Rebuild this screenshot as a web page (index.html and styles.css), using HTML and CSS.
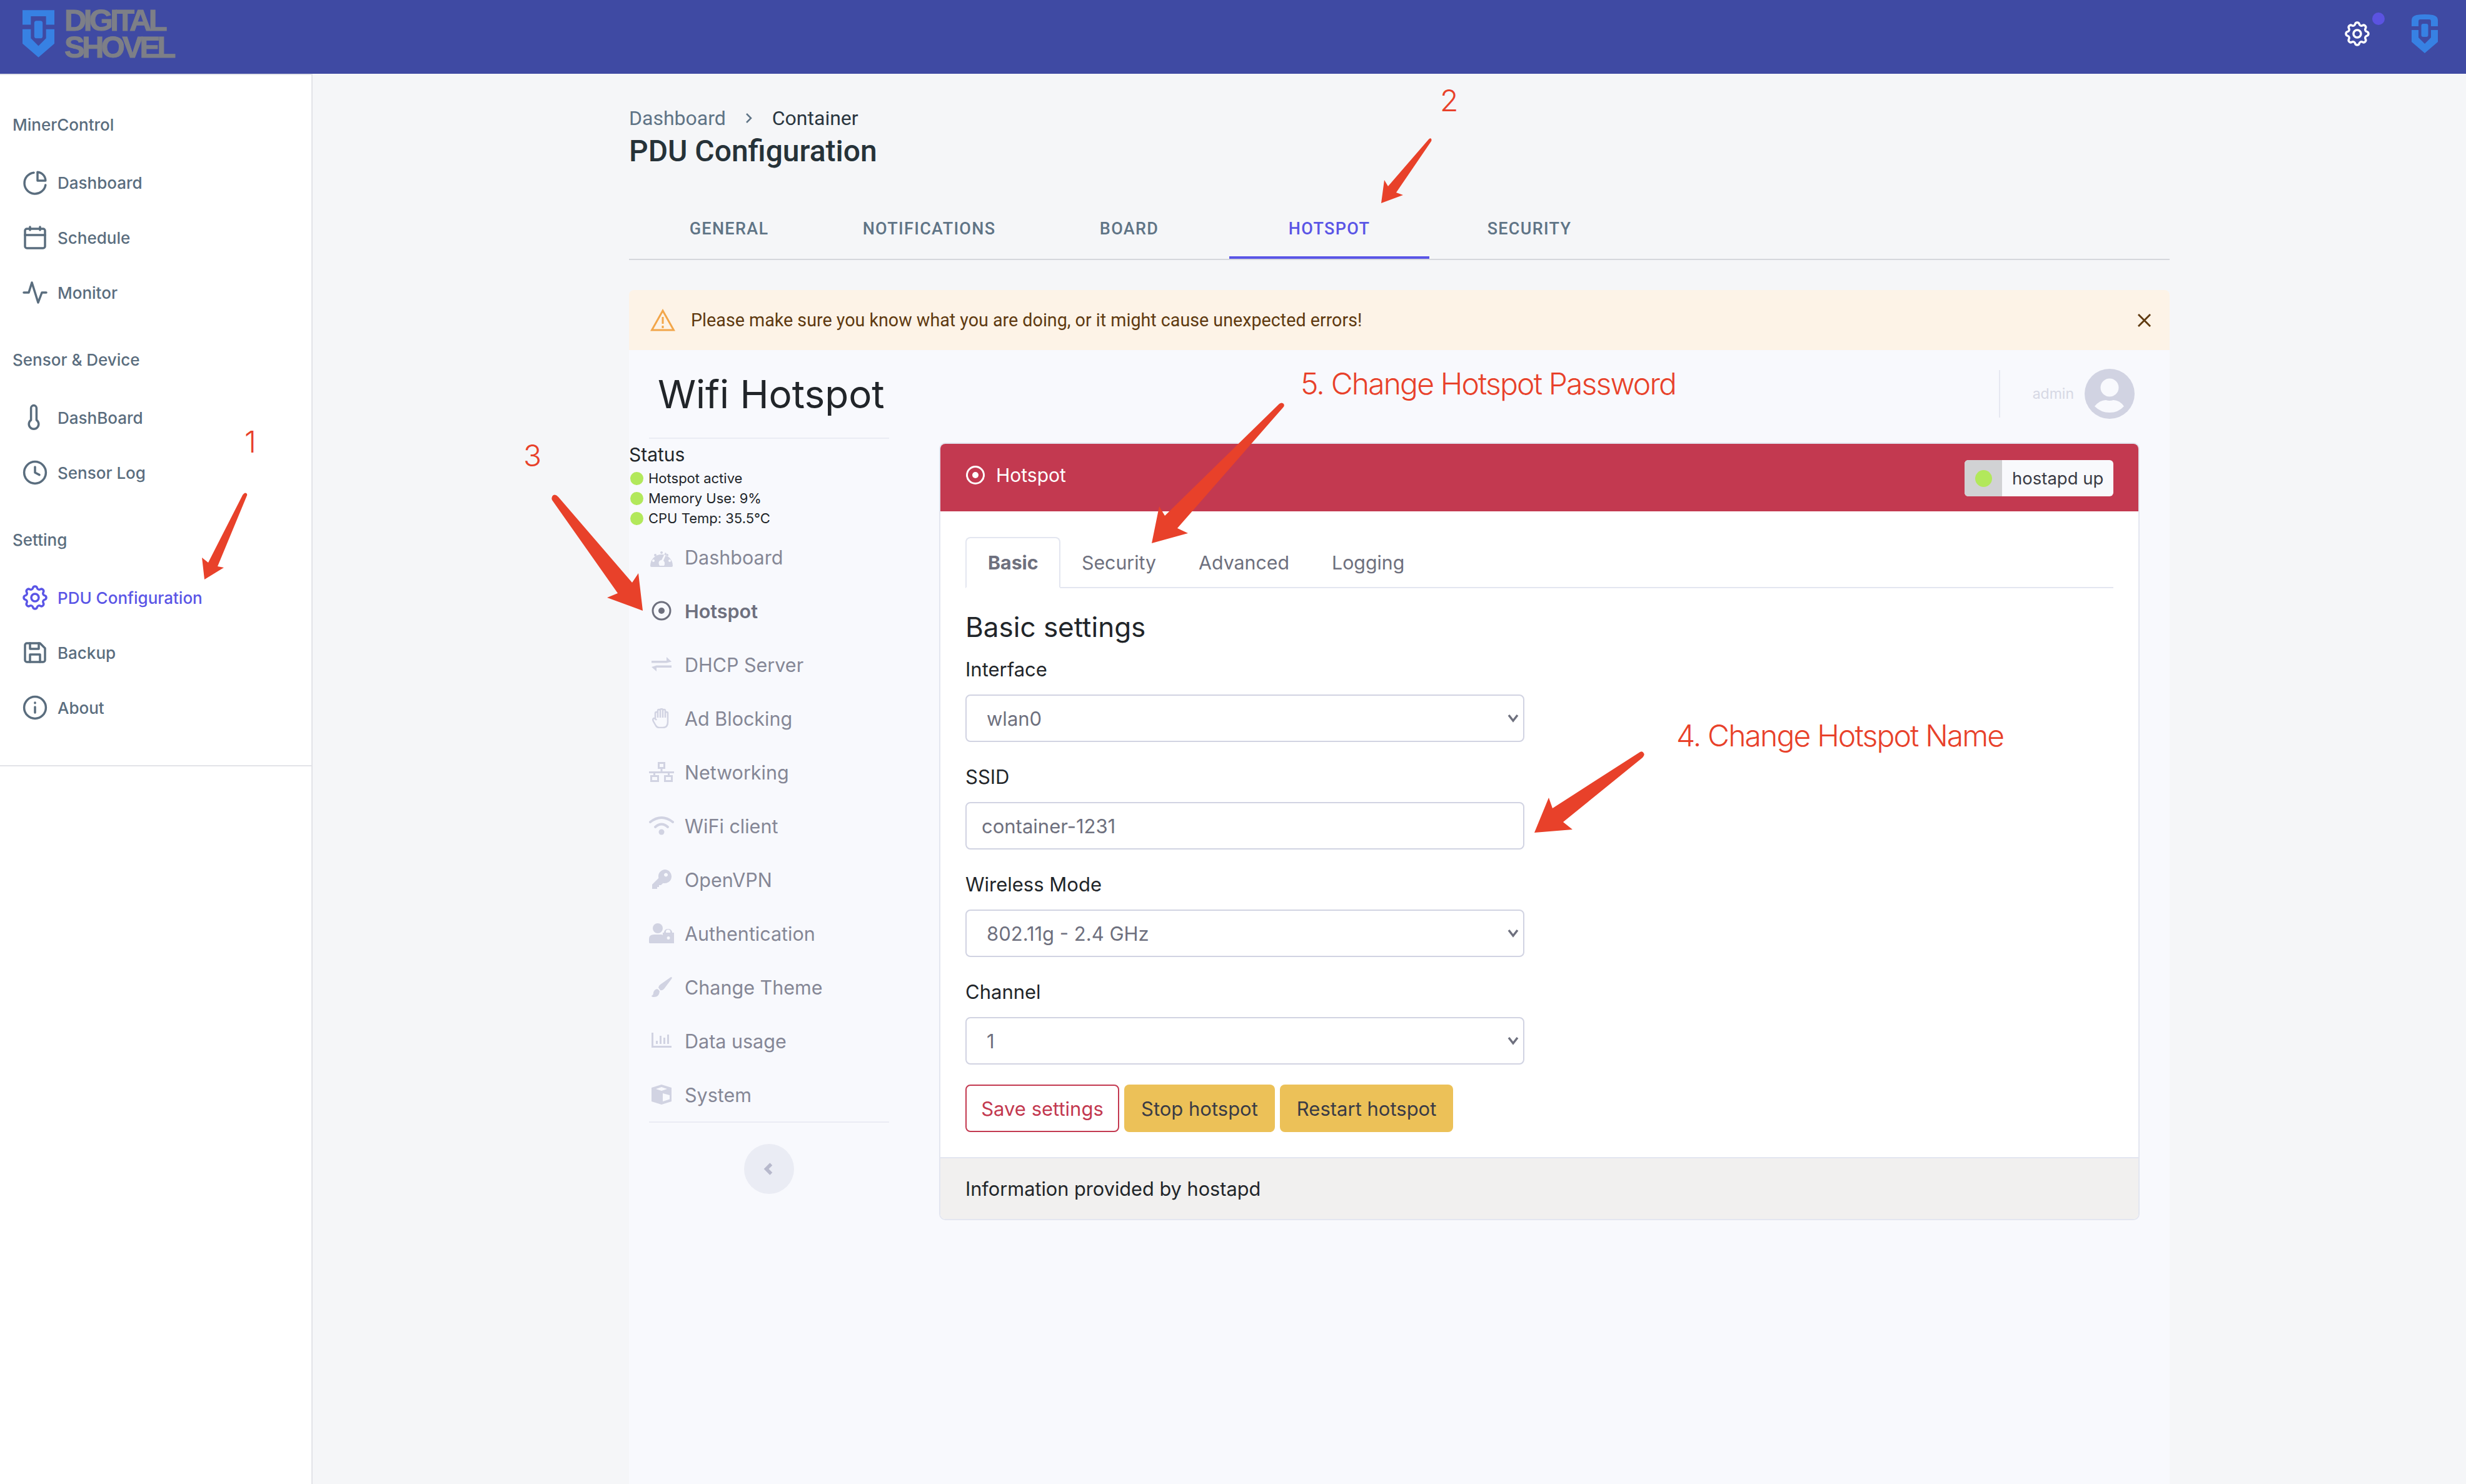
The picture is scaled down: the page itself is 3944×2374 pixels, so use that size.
FILE: index.html
```html
<!DOCTYPE html>
<html lang="en">
<head>
    <meta charset="UTF-8">
    <title>PDU Configuration</title>
    <link rel="stylesheet" href="styles.css">
</head>
<body>

<header class="topbar">
    <div class="brand">
        <svg class="brand-mark" viewBox="0 0 42 62">
            <path d="M0 19V0H42V19H31V8H11V19Z"/>
            <path d="M0 25H11V37L21 47L31 37V25H42V44L21 62L0 44Z"/>
            <rect x="15.5" y="14" width="11" height="23" rx="3"/>
        </svg>
        <div class="brand-name">DIGITAL<br>SHOVEL</div>
    </div>
    <div class="topbar-right">
        <div class="gear-wrap">
            <svg class="icon-line" viewBox="0 0 24 24"><path d="M10.325 4.317c.426-1.756 2.924-1.756 3.35 0a1.724 1.724 0 002.573 1.066c1.543-.94 3.31.826 2.37 2.37a1.724 1.724 0 001.065 2.572c1.756.426 1.756 2.924 0 3.35a1.724 1.724 0 00-1.066 2.573c.94 1.543-.826 3.31-2.37 2.37a1.724 1.724 0 00-2.572 1.065c-.426 1.756-2.924 1.756-3.35 0a1.724 1.724 0 00-2.573-1.066c-1.543.94-3.31-.826-2.37-2.37a1.724 1.724 0 00-1.065-2.572c-1.756-.426-1.756-2.924 0-3.35a1.724 1.724 0 001.066-2.573c-.94-1.543.826-3.31 2.37-2.37.996.608 2.296.07 2.572-1.065z"/><path d="M15 12a3 3 0 11-6 0 3 3 0 016 0z"/></svg>
            <span class="gear-dot"></span>
        </div>
        <svg class="small-mark" viewBox="0 0 42 62">
            <path d="M0 19V9Q0 3 8 1Q14 0 21 0Q28 0 34 1Q42 3 42 9V19H31V11Q31 8 28 8H14Q11 8 11 11V19Z"/>
            <path d="M0 25H11V37L21 47L31 37V25H42V44L21 62L0 44Z"/>
            <rect x="15.5" y="15" width="11" height="21" rx="3"/>
        </svg>
    </div>
</header>

<div class="layout">
    <aside class="sidebar">
        <nav class="sidebar-nav">
            <div class="side-title">MinerControl</div>
            <a class="side-link">
                <svg class="icon-line" viewBox="0 0 24 24"><path d="M11 4.1A8.5 8.5 0 1 0 20.4 14"/><path d="M14 3.6A7 7 0 0 1 20.4 10.5H14Z"/></svg>
                Dashboard
            </a>
            <a class="side-link">
                <svg class="icon-line" viewBox="0 0 24 24"><rect x="4" y="5" width="16" height="15.5" rx="1.5"/><path d="M4 10h16M8 3.5V6M16 3.5V6"/></svg>
                Schedule
            </a>
            <a class="side-link">
                <svg class="icon-line" viewBox="0 0 24 24"><path d="M3 12H7L9.5 4L14.5 20L17.5 12H21"/></svg>
                Monitor
            </a>

            <div class="side-title side-title-gap">Sensor &amp; Device</div>
            <a class="side-link">
                <svg class="icon-line" viewBox="0 0 24 24"><path d="M8.800 14V4.500a2.200 2.200 0 0 1 4.400 0V14a3.900 3.900 0 1 1-4.400 0Z"/></svg>
                DashBoard
            </a>
            <a class="side-link">
                <svg class="icon-line" viewBox="0 0 24 24"><circle cx="12" cy="12" r="8.7"/><path d="M12 7.5V12L15.5 13.8"/></svg>
                Sensor Log
            </a>

            <div class="side-title side-title-gap">Setting</div>
            <a class="side-link side-link-active">
                <svg class="icon-line" viewBox="0 0 24 24"><path d="M10.325 4.317c.426-1.756 2.924-1.756 3.35 0a1.724 1.724 0 002.573 1.066c1.543-.94 3.31.826 2.37 2.37a1.724 1.724 0 001.065 2.572c1.756.426 1.756 2.924 0 3.35a1.724 1.724 0 00-1.066 2.573c.94 1.543-.826 3.31-2.37 2.37a1.724 1.724 0 00-2.572 1.065c-.426 1.756-2.924 1.756-3.35 0a1.724 1.724 0 00-2.573-1.066c-1.543.94-3.31-.826-2.37-2.37a1.724 1.724 0 00-1.065-2.572c-1.756-.426-1.756-2.924 0-3.35a1.724 1.724 0 001.066-2.573c-.94-1.543.826-3.31 2.37-2.37.996.608 2.296.07 2.572-1.065z"/><path d="M15 12a3 3 0 11-6 0 3 3 0 016 0z"/></svg>
                PDU Configuration
            </a>
            <a class="side-link">
                <svg class="icon-line" viewBox="0 0 24 24"><path d="M4 6a1.500 1.500 0 0 1 1.500-1.500H16L20 8.500V18a1.500 1.500 0 0 1-1.500 1.500H5.500A1.500 1.500 0 0 1 4 18Z"/><path d="M8 4.500V9H15V4.500M8 19.500V13.500H16V19.500"/></svg>
                Backup
            </a>
            <a class="side-link">
                <svg class="icon-line" viewBox="0 0 24 24"><circle cx="12" cy="12" r="8.7"/><path d="M12 11.500V16M12 8V8.400"/></svg>
                About
            </a>
        </nav>
    </aside>

    <main class="main">
        <div class="crumbs">
            <span class="crumb-link">Dashboard</span>
            <svg class="crumb-sep" viewBox="0 0 14 18"><path d="M3 2L10 9L3 16"/></svg>
            <span class="crumb-here">Container</span>
        </div>
        <h1 class="page-title">PDU Configuration</h1>

        <div class="page-tabs">
            <a class="page-tab">GENERAL</a>
            <a class="page-tab">NOTIFICATIONS</a>
            <a class="page-tab">BOARD</a>
            <a class="page-tab page-tab-active">HOTSPOT</a>
            <a class="page-tab">SECURITY</a>
        </div>

        <div class="alert">
            <svg class="alert-icon" viewBox="0 0 40 36"><path d="M20 3L37.500 34H2.500Z"/><path d="M20 13V24M20 27V31"/></svg>
            <span class="alert-text">Please make sure you know what you are doing, or it might cause unexpected errors!</span>
            <svg class="alert-close" viewBox="0 0 22 22"><path d="M1 1L21 21M21 1L1 21"/></svg>
        </div>

        <div class="panel">
            <div class="panel-side">
                <div class="panel-brand">Wifi Hotspot</div>
                <div class="status">
                    <div class="status-title">Status</div>
                    <div class="status-row"><span class="dot"></span>Hotspot active</div>
                    <div class="status-row"><span class="dot"></span>Memory Use: 9%</div>
                    <div class="status-row"><span class="dot"></span>CPU Temp: 35.5°C</div>
                </div>
                <ul class="panel-nav">
                    <li class="panel-link">
                        <svg class="nav-icon" viewBox="0 0 40 32"><path fill-rule="evenodd" d="M2 30A18 18 0 1 1 38 30Q38 32 36 32H4Q2 32 2 30ZM20 7a2 2 0 1 0 .1 0ZM10 11a2 2 0 1 0 .1 0ZM29 11a2 2 0 1 0 .1 0ZM7 20a2 2 0 1 0 .1 0ZM33 20a2 2 0 1 0 .1 0ZM26 9L20 21a4.500 4.500 0 0 0-4.500 4.500Q15.500 28 17 30H24Q25.500 28 25 25Q24.500 23 23 22L28 10Z"/></svg>
                        Dashboard
                    </li>
                    <li class="panel-link panel-link-active">
                        <svg class="nav-icon" viewBox="0 0 40 32"><circle class="ring" cx="20" cy="16" r="14"/><circle cx="20" cy="16" r="5"/></svg>
                        Hotspot
                    </li>
                    <li class="panel-link">
                        <svg class="nav-icon" viewBox="0 0 40 32"><path d="M4 10H28V4L36 11.500L28 13.500H4ZM36 21H12V27L4 20L12 17.500H36Z"/></svg>
                        DHCP Server
                    </li>
                    <li class="panel-link">
                        <svg class="nav-icon nav-icon-line" viewBox="0 0 40 32"><path d="M10 18V8a2 2 0 0 1 4 0V4a2 2 0 0 1 4 0V3a2 2 0 0 1 4 0V4a2 2 0 0 1 4 0V8a2 2 0 0 1 4 0V22Q30 31 22 31H16Q13 31 11 28L7 21Q5 17 8 16Q10 16 12 19M14 7V15M18 4V15M22 4V15M26 7V15"/></svg>
                        Ad Blocking
                    </li>
                    <li class="panel-link">
                        <svg class="nav-icon" viewBox="0 0 40 32"><path fill-rule="evenodd" d="M14 0H26V11H21.500V15H40V18H33V21H38V32H24V21H30V18H10V21H16V32H2V21H7V18H0V15H18.500V11H14ZM17 3V8H23V3ZM5 24V29H13V24ZM27 24V29H35V24Z"/></svg>
                        Networking
                    </li>
                    <li class="panel-link">
                        <svg class="nav-icon nav-icon-arc" viewBox="0 0 40 32"><path d="M2 10Q20 -4 38 10"/><path d="M10 18Q20 9 30 18"/><circle class="arc-dot" cx="20" cy="26" r="4.500"/></svg>
                        WiFi client
                    </li>
                    <li class="panel-link">
                        <svg class="nav-icon" viewBox="0 0 40 32"><path fill-rule="evenodd" d="M25 0A11 11 0 1 1 22.500 21.700L19 25H16V28H13V31L5 31V24L15.300 13.700A11 11 0 0 1 25 0ZM27 5.500a3 3 0 1 0 .1 0Z"/></svg>
                        OpenVPN
                    </li>
                    <li class="panel-link">
                        <svg class="nav-icon" viewBox="0 0 40 32"><circle cx="14" cy="8" r="8"/><path d="M0 31V25Q0 18 8 18H20Q21 18 22 19V32H1Z"/><path fill-rule="evenodd" d="M24 15V13.500a7 7 0 0 1 13 0V15H40V32H22V15ZM27 15H34V13.500a3.500 3.500 0 0 0-7 0ZM31 21a2.500 2.500 0 1 0 .1 0Z"/></svg>
                        Authentication
                    </li>
                    <li class="panel-link">
                        <svg class="nav-icon" viewBox="0 0 40 32"><path d="M35 0Q38 0 36 3L24 19Q21 22 18 21L15 17Q15 14 18 12ZM13 19Q16 20 17 23Q16 32 8 32Q4 32 4 30Q7 29 7 25Q8 20 13 19Z"/></svg>
                        Change Theme
                    </li>
                    <li class="panel-link">
                        <svg class="nav-icon" viewBox="0 0 40 32"><path d="M4 3H7V24H36V27H4ZM11 16H14V21H11ZM17 8H20V21H17ZM23 11H26V21H23ZM29 6H32V21H29Z"/></svg>
                        Data usage
                    </li>
                    <li class="panel-link">
                        <svg class="nav-icon" viewBox="0 0 40 32"><path fill-rule="evenodd" d="M20 0L36 5V27L20 32L4 27V5ZM20 4L11 7L20 10L29 7ZM22 14V27L33 23.500V17Z"/></svg>
                        System
                    </li>
                </ul>
                <button class="collapse-btn" type="button">
                    <svg viewBox="0 0 20 20"><path d="M13 3L6 10L13 17"/></svg>
                </button>
            </div>

            <div class="panel-main">
                <div class="user-bar">
                    <span class="user-sep"></span>
                    <span class="user-name">admin</span>
                    <svg class="avatar" viewBox="0 0 80 80">
                        <circle class="avatar-bg" cx="40" cy="40" r="40"/>
                        <circle class="avatar-fg" cx="40" cy="30" r="14.500"/>
                        <path class="avatar-fg" d="M16 60Q24 50 34 50Q40 52 46 50Q56 50 63 60Q54 70 40 70Q26 70 16 60Z"/>
                    </svg>
                </div>

                <section class="card">
                    <div class="card-header">
                        <div class="card-title">
                            <svg class="card-icon" viewBox="0 0 32 32"><circle class="ring" cx="16" cy="16" r="13.500"/><circle cx="16" cy="16" r="5"/></svg>
                            Hotspot
                        </div>
                        <div class="state-badge">
                            <span class="state-light"><span class="dot dot-big"></span></span>
                            <span class="state-text">hostapd up</span>
                        </div>
                    </div>

                    <div class="card-body">
                        <div class="form-tabs">
                            <a class="form-tab form-tab-active">Basic</a>
                            <a class="form-tab">Security</a>
                            <a class="form-tab">Advanced</a>
                            <a class="form-tab">Logging</a>
                        </div>

                        <h4 class="form-heading">Basic settings</h4>

                        <div class="field">
                            <label>Interface</label>
                            <div class="select-wrap">
                                <select class="control"><option>wlan0</option></select>
                                <svg class="select-arrow" viewBox="0 0 18 14"><path d="M2 2L9 11L16 2"/></svg>
                            </div>
                        </div>
                        <div class="field">
                            <label>SSID</label>
                            <input class="control control-text" type="text" value="container-1231">
                        </div>
                        <div class="field">
                            <label>Wireless Mode</label>
                            <div class="select-wrap">
                                <select class="control"><option>802.11g - 2.4 GHz</option></select>
                                <svg class="select-arrow" viewBox="0 0 18 14"><path d="M2 2L9 11L16 2"/></svg>
                            </div>
                        </div>
                        <div class="field">
                            <label>Channel</label>
                            <div class="select-wrap">
                                <select class="control"><option>1</option></select>
                                <svg class="select-arrow" viewBox="0 0 18 14"><path d="M2 2L9 11L16 2"/></svg>
                            </div>
                        </div>

                        <div class="actions">
                            <button class="btn btn-save" type="button">Save settings</button>
                            <button class="btn btn-warn" type="button">Stop hotspot</button>
                            <button class="btn btn-warn" type="button">Restart hotspot</button>
                        </div>
                    </div>

                    <div class="card-footer">Information provided by hostapd</div>
                </section>
            </div>
        </div>
    </main>
</div>

<!-- red notes drawn on top of the screenshot -->
<svg class="arrows" viewBox="0 0 3944 2374">
    <path d="M388 792Q392 786 395 790Q396 792 394 795L348 906L358 908L327 927L323 892L333 900Z"/>
    <path d="M2284 224Q2287 220 2289 222Q2290 224 2289 226L2233 308L2244 312L2209 325L2214 288L2220 298Z"/>
    <path d="M883 800Q881 795 885 792Q889 790 893 795L1011 932L1021 917L1028 977L971 956L988 949Z"/>
    <path d="M2623 1203Q2627 1201 2629 1205Q2631 1208 2627 1212L2500 1315L2515 1327L2454 1332L2477 1276L2483 1293Z"/>
    <path d="M2046 646Q2050 643 2053 646Q2055 649 2052 652L1883 845L1900 853L1842 869L1854 810L1863 825Z"/>
</svg>
<span class="note note-1">1</span>
<span class="note note-2">2</span>
<span class="note note-3">3</span>
<span class="note note-4">4. Change Hotspot Name</span>
<span class="note note-5">5. Change Hotspot Password</span>

</body>
</html>
```

FILE: styles.css
```css
* {
    box-sizing: border-box;
}

html, body {
    height: 100%;
}

body {
    margin: 0;
    position: relative;
    display: flex;
    flex-direction: column;
    overflow: hidden;
    font-family: Inter, "Noto Sans", sans-serif;
    font-size: 31px;
    color: #212529;
    background-color: #f5f6f8;
}

svg {
    display: block;
    flex: none;
}

.icon-line {
    width: 48px;
    height: 48px;
    fill: none;
    stroke: currentColor;
    stroke-width: 1.75;
    stroke-linecap: round;
    stroke-linejoin: round;
}

/* top bar */
.topbar {
    height: 118px;
    flex: none;
    display: flex;
    align-items: center;
    justify-content: space-between;
    padding: 0 45px 10px 36px;
    background-color: #3f4aa3;
    color: #fff;
}

.brand {
    display: flex;
    align-items: center;
    gap: 16px;
}

.brand-mark {
    width: 51px;
    height: 76px;
    fill: #3781e3;
}

.brand-name {
    font-family: "Liberation Sans", Arial, sans-serif;
    font-weight: 700;
    font-size: 49px;
    line-height: 43px;
    letter-spacing: -4.6px;
    color: #7d7f87;
    -webkit-text-stroke: 1px #7d7f87;
}

.topbar-right {
    display: flex;
    align-items: center;
    gap: 63px;
}

.gear-wrap {
    position: relative;
}

.gear-dot {
    position: absolute;
    top: -10px;
    right: -20px;
    width: 20px;
    height: 20px;
    border-radius: 50%;
    background-color: #5b53e0;
}

.small-mark {
    width: 42px;
    height: 62px;
    fill: #3781e3;
}

/* layout */
.layout {
    flex: 1;
    display: flex;
    min-height: 0;
}

.sidebar {
    width: 500px;
    flex: none;
    background-color: #fff;
    border-top: 2px solid #e2e3e8;
    border-right: 2px solid #e2e3e8;
}

.sidebar-nav {
    padding: 60px 0 48px;
    border-bottom: 2px solid #e2e3e8;
}

.side-title {
    height: 40px;
    line-height: 40px;
    padding-left: 20px;
    margin-bottom: 28px;
    font-size: 26px;
    font-weight: 500;
    color: #5a6d7e;
}

.side-title-gap {
    margin-top: 44px;
}

.side-link {
    height: 88px;
    display: flex;
    align-items: center;
    gap: 12px;
    padding-left: 32px;
    font-size: 26px;
    font-weight: 500;
    color: #5a6d7e;
}

.side-link-active {
    color: #5a55e6;
}

/* main column */
.main {
    flex: 1;
    display: flex;
    flex-direction: column;
    min-width: 0;
    padding: 49px 474px 0 506px;
}

.crumbs {
    height: 44px;
    display: flex;
    align-items: center;
    font-family: Roboto, sans-serif;
    font-size: 32px;
}

.crumb-link {
    color: #5f7486;
}

.crumb-sep {
    width: 14px;
    height: 18px;
    margin: 0 30px;
    fill: none;
    stroke: #5f7486;
    stroke-width: 2.5;
}

.crumb-here {
    color: #2a3640;
}

.page-title {
    margin: 0;
    height: 62px;
    line-height: 62px;
    font-family: Roboto, sans-serif;
    font-size: 48px;
    font-weight: 500;
    color: #263238;
}

.page-tabs {
    display: flex;
    flex: none;
    margin-top: 41px;
    border-bottom: 2px solid #d5d7dc;
}

.page-tab {
    width: 320px;
    height: 100px;
    display: flex;
    align-items: center;
    justify-content: center;
    padding-top: 8px;
    font-family: Roboto, sans-serif;
    font-size: 27px;
    font-weight: 500;
    letter-spacing: 1.3px;
    color: #5f7486;
    border-bottom: 4px solid transparent;
}

.page-tab-active {
    color: #5a55e6;
    border-bottom-color: #5a55e6;
}

.alert {
    height: 96px;
    flex: none;
    margin-top: 48px;
    display: flex;
    align-items: center;
    padding: 0 30px 0 34px;
    border-radius: 8px 8px 0 0;
    background-color: #fdf3e7;
    color: #5f3a10;
    font-family: Roboto, sans-serif;
    font-size: 28.7px;
}

.alert-icon {
    width: 40px;
    height: 36px;
    fill: none;
    stroke: #f2a64a;
    stroke-width: 3;
}

.alert-text {
    margin-left: 25px;
    flex: 1;
}

.alert-close {
    width: 21px;
    height: 21px;
    fill: none;
    stroke: #5f3a10;
    stroke-width: 3;
}

/* panel under the alert */
.panel {
    flex: 1;
    display: flex;
    background-color: #f8f9fd;
    min-height: 0;
}

.panel-side {
    width: 496px;
    flex: none;
}

.panel-brand {
    height: 142px;
    margin-left: 32px;
    width: 384px;
    padding-left: 14px;
    display: flex;
    align-items: center;
    white-space: nowrap;
    font-size: 62px;
    color: #212529;
    border-bottom: 2px solid #eaecf4;
}

.status {
    padding-top: 5px;
}

.status-title {
    height: 40px;
    line-height: 40px;
    margin-bottom: 2px;
    font-size: 30px;
}

.status-row {
    height: 32px;
    display: flex;
    align-items: center;
    gap: 8px;
    padding-left: 2px;
    font-size: 22px;
}

.dot {
    width: 21px;
    height: 21px;
    flex: none;
    border-radius: 50%;
    background-color: #b2e85b;
}

.panel-nav {
    list-style: none;
    margin: 3px 0 0 32px;
    padding: 0;
    width: 384px;
    border-bottom: 2px solid #eaecf4;
}

.panel-link {
    height: 86px;
    display: flex;
    align-items: center;
    gap: 17px;
    font-size: 30.5px;
    color: #858796;
}

.nav-icon {
    width: 40px;
    height: 32px;
    fill: #d1d3e2;
}

.nav-icon-line {
    fill: none;
    stroke: #d1d3e2;
    stroke-width: 2.5;
    stroke-linejoin: round;
}

.nav-icon-arc {
    fill: none;
    stroke: #d1d3e2;
    stroke-width: 4;
    stroke-linecap: round;
}

.arc-dot {
    fill: #d1d3e2;
    stroke: none;
}

.panel-link-active {
    font-weight: 600;
    color: #6e707e;
}

.panel-link-active .nav-icon {
    fill: #6e707e;
}

.ring {
    fill: none;
    stroke: #6e707e;
    stroke-width: 3;
}

.collapse-btn {
    display: flex;
    align-items: center;
    justify-content: center;
    width: 80px;
    height: 80px;
    margin: 34px 0 0 184px;
    padding: 0;
    border: none;
    border-radius: 50%;
    background-color: #eaecf4;
}

.collapse-btn svg {
    width: 22px;
    height: 22px;
    fill: none;
    stroke: #b7b9cc;
    stroke-width: 5;
}

.panel-main {
    flex: 1;
    min-width: 0;
    padding-right: 48px;
}

.user-bar {
    height: 148px;
    padding: 30px 8px 0 0;
    display: flex;
    align-items: flex-start;
    justify-content: flex-end;
}

.user-sep {
    width: 2px;
    height: 76px;
    margin-top: 2px;
    margin-right: 52px;
    background-color: #e6e8f1;
}

.user-name {
    height: 80px;
    line-height: 80px;
    margin-right: 17px;
    font-size: 23px;
    color: #d6d8e4;
}

.avatar {
    width: 80px;
    height: 80px;
}

.avatar-bg {
    fill: #d1d3e2;
}

.avatar-fg {
    fill: #f8f9fd;
}

/* card */
.card {
    border: 2px solid #e3e6f0;
    border-radius: 10px;
    background-color: #fff;
    overflow: hidden;
}

.card-header {
    height: 108px;
    display: flex;
    align-items: center;
    justify-content: space-between;
    padding: 0 40px;
    background-color: #c33950;
    color: #fff;
}

.card-title {
    display: flex;
    align-items: center;
    gap: 17px;
    padding-bottom: 8px;
    font-size: 30px;
}

.card-icon {
    width: 32px;
    height: 32px;
    fill: #fff;
}

.card-icon .ring {
    stroke: #fff;
}

.state-badge {
    display: flex;
    height: 58px;
    width: 238px;
    margin-top: 2px;
    border-radius: 6px;
    overflow: hidden;
    background-color: #f8f9fc;
}

.state-light {
    width: 60px;
    display: flex;
    align-items: center;
    justify-content: center;
    background-color: #d1d2d4;
}

.dot-big {
    width: 27px;
    height: 27px;
}

.state-text {
    padding-left: 16px;
    line-height: 58px;
    font-size: 27.5px;
    color: #3a3b45;
}

.card-body {
    padding: 41px 40px 40px;
}

.form-tabs {
    display: flex;
    height: 82px;
    border-bottom: 2px solid #e3e6f0;
}

.form-tab {
    height: 82px;
    display: flex;
    align-items: center;
    padding: 0 34px;
    font-size: 30.3px;
    color: #6e707e;
}

.form-tab-active {
    width: 152px;
    font-weight: 700;
    background-color: #fff;
    border: 2px solid #e3e6f0;
    border-bottom-color: #fff;
    border-radius: 8px 8px 0 0;
}

.form-heading {
    margin: 32px 0 18px;
    height: 60px;
    line-height: 60px;
    font-size: 44px;
    font-weight: 400;
}

.field label {
    display: block;
    height: 40px;
    line-height: 40px;
    margin-bottom: 20px;
    font-size: 31px;
}

.field {
    margin-bottom: 36px;
}

.select-wrap {
    position: relative;
    width: 894px;
}

.select-arrow {
    position: absolute;
    right: 9px;
    top: 31px;
    width: 18px;
    height: 14px;
    fill: none;
    stroke: #6e707e;
    stroke-width: 3.5;
    pointer-events: none;
}

.control {
    display: block;
    width: 894px;
    height: 76px;
    padding: 0 32px;
    border: 2px solid #d1d3e2;
    border-radius: 8px;
    background-color: #fff;
    appearance: none;
    font-family: Inter, "Noto Sans", sans-serif;
    font-size: 31px;
    color: #6e707e;
}

.control-text {
    padding: 0 24px;
}

.actions {
    display: flex;
    gap: 8px;
    margin-top: -4px;
}

.btn {
    height: 76px;
    padding: 0 25px;
    border: 2px solid transparent;
    border-radius: 8px;
    font-family: Inter, "Noto Sans", sans-serif;
    font-size: 31px;
}

.btn-save {
    width: 246px;
    padding: 0;
    background-color: #fff;
    border-color: #c33950;
    color: #c33950;
}

.btn-warn {
    background-color: #ecc158;
    color: #3a3b45;
}

.card-footer {
    height: 99px;
    display: flex;
    align-items: center;
    padding: 0 40px;
    border-top: 2px solid #e3e6f0;
    background-color: #f1f0ef;
    font-size: 30.7px;
}

/* red notes */
.arrows {
    position: absolute;
    left: 0;
    top: 0;
    width: 3944px;
    height: 2374px;
    fill: #e8412a;
    pointer-events: none;
}

.note {
    position: absolute;
    font-size: 48px;
    line-height: 60px;
    font-weight: 300;
    letter-spacing: -1.85px;
    color: #e8412a;
    white-space: nowrap;
}

.note-1 { left: 391px; top: 677px; }
.note-2 { left: 2303px; top: 131px; }
.note-3 { left: 837px; top: 699px; }
.note-4 { left: 2681px; top: 1147px; }
.note-5 { left: 2080px; top: 584px; }
```
